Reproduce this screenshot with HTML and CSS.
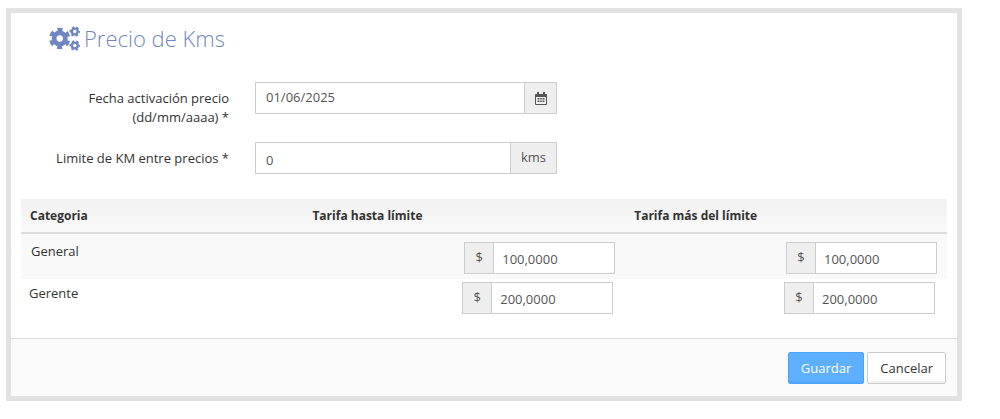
FILE: index.html
```html
<!DOCTYPE html>
<html lang="es">
<head>
    <meta charset="UTF-8">
    <meta name="viewport" content="width=device-width, initial-scale=1.0">
    <title>Precio de Kms</title>
    <link rel="stylesheet" href="styles.css">
</head>
<body>
    <form class="panel">
        <div class="panel-body">
            <h1 class="title">
                <svg class="icon-cogs" viewBox="0 0 31 28" aria-hidden="true">
                    <g fill="none" stroke="currentColor">
                        <circle cx="10.700" cy="13.500" r="5.600" stroke-width="4.800"/>
                        <circle cx="10.700" cy="13.500" r="9" stroke-width="3.400" stroke-dasharray="5 4.425" stroke-dashoffset="-2.210"/>
                        <circle cx="25.800" cy="6.500" r="2.900" stroke-width="2.400"/>
                        <circle cx="25.800" cy="6.500" r="4.500" stroke-width="1.600" stroke-dasharray="2.500 2.212" stroke-dashoffset="1.250"/>
                        <circle cx="25.800" cy="20.500" r="2.900" stroke-width="2.400"/>
                        <circle cx="25.800" cy="20.500" r="4.500" stroke-width="1.600" stroke-dasharray="2.500 2.212" stroke-dashoffset="1.250"/>
                    </g>
                </svg>
                Precio de Kms
            </h1>

            <div class="field">
                <label for="fecha">Fecha activación precio (dd/mm/aaaa) *</label>
                <div class="input-group">
                    <input type="text" id="fecha" class="input-date" value="01/06/2025">
                    <button type="button" class="addon" aria-label="Abrir calendario">
                        <svg class="icon-calendar" viewBox="0 0 12 13" aria-hidden="true">
                            <path fill-rule="evenodd" d="M1 2h1V0h2v2h4V0h2v2h1q1 0 1 1v9q0 1-1 1H1q-1 0-1-1V3q0-1 1-1zM1 5v7h10V5z"/>
                            <path d="M2.500 6h2v1.500h-2zM5.200 6h1.600v1.500H5.200zM7.500 6h2v1.500h-2zM2.500 8.500h2V10h-2zM5.200 8.500h1.600V10H5.200zM7.500 8.500h2V10h-2z"/>
                        </svg>
                    </button>
                </div>
            </div>

            <div class="field">
                <label for="limite">Limite de KM entre precios *</label>
                <div class="input-group">
                    <input type="text" id="limite" value="0">
                    <span class="addon">kms</span>
                </div>
            </div>

            <table class="tarifas">
                <thead>
                    <tr>
                        <th class="col-categoria">Categoria</th>
                        <th>Tarifa hasta límite</th>
                        <th>Tarifa más del límite</th>
                    </tr>
                </thead>
                <tbody>
                    <tr class="odd">
                        <td>General</td>
                        <td>
                            <div class="input-group price">
                                <span class="addon">$</span>
                                <input type="text" aria-label="General, tarifa hasta límite" value="100,0000">
                            </div>
                        </td>
                        <td>
                            <div class="input-group price">
                                <span class="addon">$</span>
                                <input type="text" aria-label="General, tarifa más del límite" value="100,0000">
                            </div>
                        </td>
                    </tr>
                    <tr class="even">
                        <td class="categoria">Gerente</td>
                        <td>
                            <div class="input-group price">
                                <span class="addon">$</span>
                                <input type="text" aria-label="Gerente, tarifa hasta límite" value="200,0000">
                            </div>
                        </td>
                        <td>
                            <div class="input-group price">
                                <span class="addon">$</span>
                                <input type="text" aria-label="Gerente, tarifa más del límite" value="200,0000">
                            </div>
                        </td>
                    </tr>
                </tbody>
            </table>
        </div>

        <div class="panel-footer">
            <button type="submit" class="btn btn-primary">Guardar</button>
            <button type="button" class="btn">Cancelar</button>
        </div>
    </form>
</body>
</html>
```

FILE: styles.css
```css
* {
    box-sizing: border-box;
}
body {
    margin: 8px 38px 8px 6px;
    background-color: #fff;
    color: #333;
    font-family: "Open Sans", "Noto Sans", sans-serif;
    font-size: 13px;
    line-height: 19px;
}
input,
button {
    font: inherit;
    color: inherit;
}
.panel {
    border: 5px solid #e2e2e2;
}
.panel-body {
    padding: 8px 10px 24px;
}
.title {
    display: flex;
    align-items: center;
    gap: 4px;
    margin: 0 0 26px 28px;
    color: #6f87c0;
    font-size: 22px;
    font-weight: 300;
    line-height: 35px;
}
.icon-cogs {
    width: 31px;
    height: 28px;
}
.field {
    display: flex;
    align-items: flex-start;
    gap: 26px;
    margin-bottom: 25px;
}
.field label {
    width: 208px;
    padding: 7px 0 0 30px;
    text-align: right;
}
.field .input-group {
    width: 302px;
}
.field:has(.input-date) {
    margin-bottom: 15px;
}
.input-group {
    display: flex;
    height: 32px;
    border: 1px solid #ccc;
    background-color: #fff;
    color: #555;
}
.input-group input {
    flex: 1;
    min-width: 0;
    padding: 4px 10px 0;
    border: 0;
    background: none;
}
.input-group .input-date {
    padding: 0 10px 2px;
}
.addon {
    display: flex;
    justify-content: center;
    padding: 5px 10px;
    border: 0;
    border-left: 1px solid #ccc;
    background-color: #eee;
}
button.addon {
    width: 32px;
    align-items: center;
}
.icon-calendar {
    width: 12px;
    height: 13px;
    flex: none;
    fill: currentColor;
}
.tarifas {
    width: 100%;
    border-collapse: collapse;
    table-layout: fixed;
}
.tarifas thead {
    background: linear-gradient(#f1f1f1, #fafafa);
}
.tarifas th {
    padding: 7px 9px;
    border-bottom: 2px solid #ddd;
    font-size: 12px;
    text-align: left;
}
.tarifas .col-categoria {
    width: 30.5%;
}
.tarifas td {
    vertical-align: top;
}
.odd {
    background-color: #f9f9f9;
}
.odd td {
    padding: 8px 10px 5px;
}
.even td {
    padding: 3px 12px 0 8px;
}
.even .categoria {
    padding-top: 5px;
}
.price {
    width: 151px;
    margin-left: auto;
}
.price .addon {
    width: 29px;
    border-left: 0;
    border-right: 1px solid #ccc;
}
.input-group.price input {
    padding: 3px 8px 0;
}
.panel-footer {
    display: flex;
    justify-content: flex-end;
    gap: 3px;
    padding: 13px 11px 12px;
    border-top: 1px solid #ddd;
    background-color: #fafafa;
}
.btn {
    height: 32px;
    padding: 0 12px;
    border: 1px solid #ccc;
    border-radius: 2px;
    background-color: #fff;
    box-shadow: inset 0 -2px 0 #f1f1f1;
}
.btn-primary {
    border-color: #4aa5fa;
    background-color: #5eb0ff;
    box-shadow: inset 0 -2px 0 #55a9f8;
    color: #fff;
}
```
